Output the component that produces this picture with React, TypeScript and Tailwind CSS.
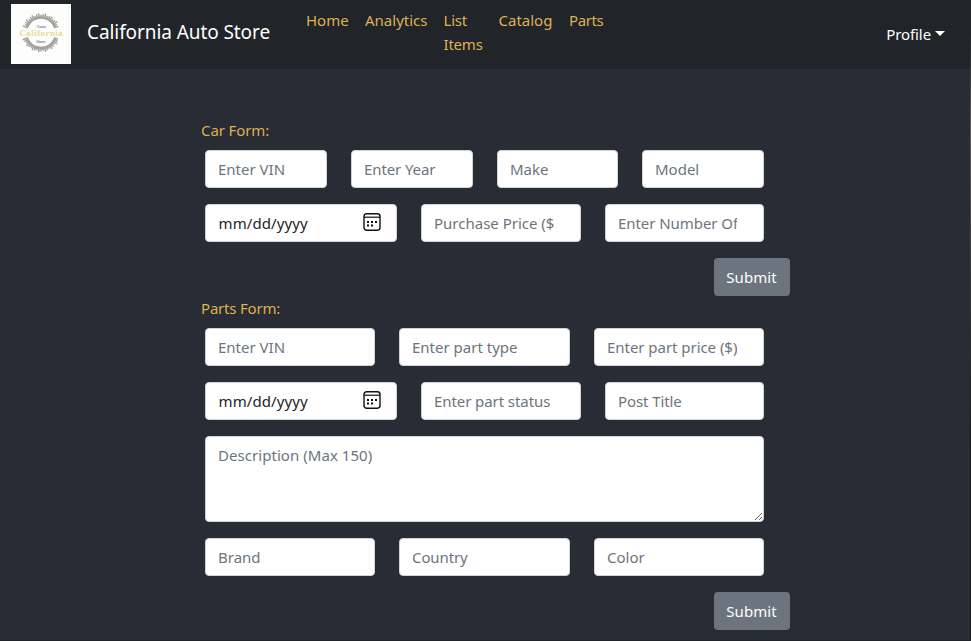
import React from "react";

type FieldProps = { label: string; size: string; tracking?: string };

const control =
  "h-[38px] shrink-0 rounded border border-[#ced4da] bg-white text-[15px] leading-6 text-[#212529]";

function Field({ label, size, tracking = "" }: FieldProps) {
  return (
    <input
      type="text"
      placeholder={label}
      className={`${control} pl-3 pr-[26px] outline-none placeholder:text-[#6c757d] placeholder:opacity-100 ${size} ${tracking}`}
    />
  );
}

function DateField() {
  return (
    <div className={`${control} flex w-[192px] items-center justify-between pl-[12.5px] pr-[15.5px]`}>
      <span className="tracking-[0.1px]">mm/dd/yyyy</span>
      <svg width="18" height="18" viewBox="0 0 18 18" fill="none" stroke="#111" className="-mt-0.5">
        <rect x="1" y="0.8" width="16" height="16.4" rx="2.6" strokeWidth="1.4" />
        <path d="M1 4.2H17" strokeWidth="1.2" />
        <g fill="#111" stroke="none">
          <rect x="4" y="8" width="2" height="2" />
          <rect x="8" y="8" width="2" height="2" />
          <rect x="12" y="8" width="2" height="2" />
          <rect x="4" y="11.5" width="2" height="2" />
          <rect x="8" y="11.5" width="2" height="2" />
        </g>
      </svg>
    </div>
  );
}

function Submit() {
  return (
    <div className="mt-4 flex w-[585px] justify-end">
      <button className="h-[38px] w-[76px] rounded bg-[#6c757d] pr-px text-[15px] leading-6 tracking-[0.1px] text-white">Submit</button>
    </div>
  );
}

function Logo() {
  const spikes = Array.from({ length: 52 }, (_, i) => {
    const a = (i * Math.PI * 2) / 52;
    const r = 18 + (i % 3) * 0.8;
    return { x1: 14 * Math.cos(a), y1: 14 * Math.sin(a), x2: r * Math.cos(a), y2: r * Math.sin(a), side: Math.abs(Math.sin(a)) < 0.34 };
  }).filter((s) => !s.side);
  return (
    <svg width="60" height="60" viewBox="0 0 60 60" className="shrink-0 bg-[#fdfdfd]">
      <g transform="translate(30 28.8)" stroke="#a3a39c" strokeWidth="1.5">
        {spikes.map((s, i) => (
          <line key={i} x1={s.x1} y1={s.y1} x2={s.x2} y2={s.y2} />
        ))}
        <path d="M-14 -6A15.2 15.2 0 0 1 14 -6M-14 6A15.2 15.2 0 0 0 14 6" fill="none" strokeWidth="2.6" />
      </g>
      <g textAnchor="middle" fontFamily="Liberation Serif, serif" fontWeight="bold">
        <text x="30" y="23.5" fontSize="5" fill="#8b8f98" textLength="10">Auto</text>
        <text x="30" y="32" fontSize="8.5" fill="#ecd596" textLength="43">California</text>
        <text x="30" y="38.5" fontSize="5" fill="#8b8f98" textLength="10">Store</text>
      </g>
    </svg>
  );
}

export default function App() {
  return (
    <div className="relative h-[641px] w-[971px] overflow-hidden bg-[#282c34] font-['Noto_Sans','Open_Sans',sans-serif] text-[15px] leading-6">
      <header className="flex h-[69px] bg-[#212529] pl-[11px] pt-1">
        <Logo />
        <div className="ml-4 mt-[13px] w-[219px] whitespace-nowrap text-[19px] leading-[30px] tracking-[-0.08px] text-white">California Auto Store</div>
        <nav className="flex pt-1 text-[#deb052]">
          <a className="w-[59px]">Home</a>
          <a className="w-[78.5px]">Analytics</a>
          <a className="w-[55px] tracking-[-0.2px]">List<br />Items</a>
          <a className="w-[70.5px]">Catalog</a>
          <a className="tracking-[-0.4px]">Parts</a>
        </nav>
        <div className="ml-auto mr-[26px] flex h-[60px] items-center text-white">
          <span className="tracking-[-0.1px]">Profile</span>
          <span className="ml-1 -mt-0.5 border-x-[5px] border-t-[5px] border-x-transparent border-t-white" />
        </div>
      </header>
      <main className="pl-[205px] pt-[49px]">
        <h2 className="-ml-1 h-8 tracking-[-0.1px] text-[#deb052]">Car Form:</h2>
        <div className="flex gap-6">
          <Field label="Enter VIN" size="w-[122px]" />
          <Field label="Enter Year" size="w-[122px]" tracking="tracking-[-0.1px]" />
          <Field label="Make" size="w-[121px]" />
          <Field label="Model" size="w-[122px]" />
        </div>
        <div className="mt-4 flex gap-6">
          <DateField />
          <Field label="Purchase Price ($" size="w-[160px]" />
          <Field label="Enter Number Of Owners" size="w-[159px]" tracking="tracking-[-0.06px]" />
        </div>
        <Submit />
        <h2 className="-ml-1 h-8 tracking-[-0.2px] text-[#deb052]">Parts Form:</h2>
        <div className="flex gap-6">
          <Field label="Enter VIN" size="w-[170px]" />
          <Field label="Enter part type" size="w-[171px]" />
          <Field label="Enter part price ($)" size="w-[170px]" tracking="tracking-[-0.04px]" />
        </div>
        <div className="mt-4 flex gap-6">
          <DateField />
          <Field label="Enter part status" size="w-[160px]" tracking="tracking-[-0.08px]" />
          <Field label="Post Title" size="w-[159px]" tracking="tracking-[-0.1px]" />
        </div>
        <textarea
          placeholder="Description (Max 150)"
          className="mt-4 block h-[86px] w-[559px] rounded border border-[#ced4da] bg-white px-3 py-1.5 text-[15px] leading-6 tracking-[0.05px] placeholder:text-[#6c757d]"
        />
        <div className="mt-4 flex gap-6">
          <Field label="Brand" size="w-[170px]" />
          <Field label="Country" size="w-[171px]" tracking="tracking-[-0.1px]" />
          <Field label="Color" size="w-[170px]" />
        </div>
        <Submit />
      </main>
      <div className="absolute inset-y-0 right-0 w-px bg-linear-to-b from-[#212529] from-5% via-[#5c5d5a] via-20% to-[#15171a] to-70%" />
      <div className="absolute inset-x-0 bottom-0 h-px bg-[#202329]" />
    </div>
  );
}
